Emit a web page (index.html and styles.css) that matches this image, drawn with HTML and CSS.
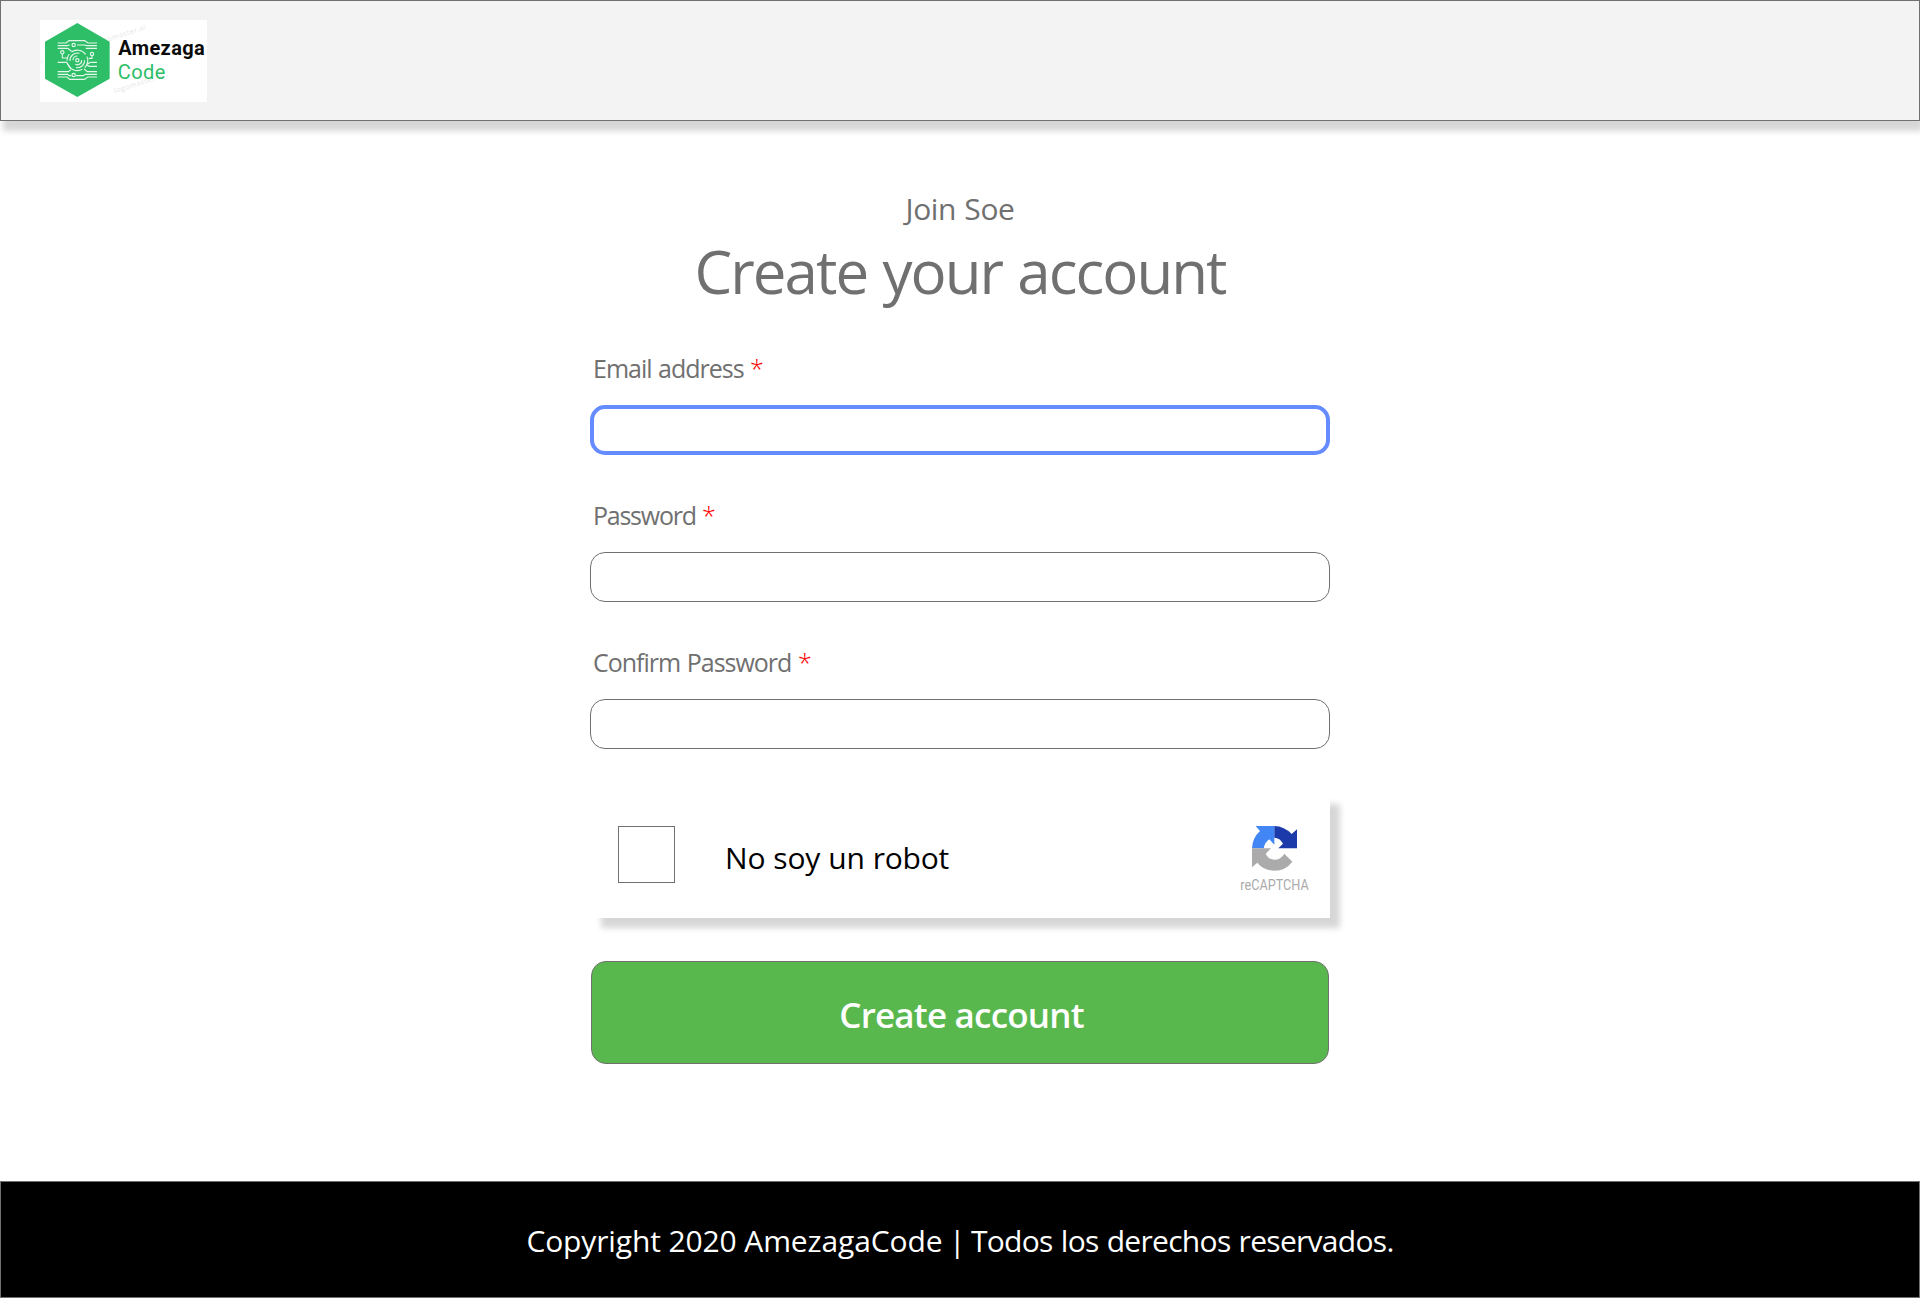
FILE: index.html
```html
<!DOCTYPE html>
<html lang="en">
<head>
<meta charset="utf-8">
<title>Create your account</title>
<link rel="stylesheet" href="styles.css">
</head>
<body>
<header class="header">
  <svg class="logo" viewBox="120 60 501 246" role="img" aria-label="Amezaga Code">
    <rect x="120" y="60" width="501" height="246" fill="#fff"/>
    <g class="watermark">
      <text transform="translate(292 135) rotate(-18)" textLength="154">logomaster.ai</text>
      <text transform="translate(345 280) rotate(-18)" textLength="154">logomaster.ai</text>
      <text transform="translate(123 194) rotate(-18)">r.</text>
    </g>
    <path fill="#2dbe67" d="M232 69 329 125V236L232 291 135 236V125Z"/>
    <g class="circuit">
      <path d="M173 129H198L207 122H214M228 122H254L264 129H291M173 137H201L209 135M173 145H203L214 153M231 135H251L261 137H291M257 145H291M187 163V174H201M276 168V175H266M173 187H200L212 205M291 187H272L263 192M291 199H268L259 194M173 215H205L213 209M173 223H203L208 227H214M173 231H201L209 238H254L263 231H291M228 227H250L256 223H291M252 207 262 215H291M207 122H254"/>
      <circle cx="221" cy="135" r="5"/>
      <circle cx="187" cy="157" r="5"/>
      <circle cx="276" cy="162" r="5"/>
      <circle cx="221" cy="225" r="5"/>
      <circle cx="232" cy="181" r="5"/>
      <path d="M214 156A31 31 0 0 1 257 163M261 170A31 31 0 0 1 254 203M247 208A31 31 0 0 1 203 192M201 182A31 31 0 0 1 208 162"/>
      <path d="M210 183A22 22 0 0 1 238 160M254 181A22 22 0 0 1 228 203M219 181A13 13 0 0 1 232 168M245 180A13 13 0 0 1 226 193"/>
    </g>
    <text class="brand brand-strong" x="355" y="166" textLength="259">Amezaga</text>
    <text class="brand brand-light" x="353" y="238" textLength="143">Code</text>
  </svg>
</header>

<main class="main">
  <p class="eyebrow">Join Soe</p>
  <h1 class="title">Create your account</h1>
  <form class="form">
    <div class="field">
      <label class="label" for="email">Email address <span class="required">*</span></label>
      <input class="input input-active" id="email" type="email">
    </div>
    <div class="field">
      <label class="label label-password" for="password">Password <span class="required">*</span></label>
      <input class="input" id="password" type="password">
    </div>
    <div class="field">
      <label class="label" for="confirm">Confirm Password <span class="required">*</span></label>
      <input class="input" id="confirm" type="password">
    </div>
    <div class="captcha">
      <span class="checkbox"></span>
      <span class="captcha-text">No soy un robot</span>
      <svg class="recaptcha" viewBox="117 104 216 216" role="img" aria-label="reCAPTCHA">
        <path fill="#4285f4" d="M167 107H223V163L208 147Q194 156 191 174H156Q157 143 180 122Z"/>
        <path fill="#1c3aa9" d="M223 107Q253 108 275 131L291 117V174H235L249 160Q240 142 223 142Z"/>
        <path fill="#ababab" d="M156 174H213L197 190Q206 208 223 208Q243 208 253 190L277 214Q257 241 223 241Q191 241 172 217L156 231Z"/>
        <text class="recaptcha-name" x="121" y="299" textLength="205" lengthAdjust="spacingAndGlyphs">reCAPTCHA</text>
      </svg>
    </div>
    <button class="submit" type="button">Create account</button>
  </form>
</main>

<footer class="footer">
  <p class="copyright"><span class="owner">Copyright 2020 AmezagaCode</span> | <span class="rights">Todos los derechos reservados.</span></p>
</footer>
</body>
</html>
```
FILE: styles.css
```css
* {
  box-sizing: border-box;
}

body {
  margin: 0;
  min-height: 1298px;
  display: flex;
  flex-direction: column;
  background: #fff;
  color: #707070;
  font-family: "Open Sans", "Noto Sans", sans-serif;
}

p,
h1 {
  margin: 0;
}

.header {
  height: 121px;
  padding: 19px 39px;
  background: #f3f3f3;
  border: 1px solid #707070;
  box-shadow: 3px 10px 6px rgba(0, 0, 0, 0.16);
}

.logo {
  display: block;
  width: 167px;
  height: 82px;
}

.watermark {
  fill: #e6e6e6;
  font: 400 21px "Open Sans", sans-serif;
}

.circuit {
  fill: none;
  stroke: #e3f7eb;
  stroke-width: 3.4;
}

.brand {
  font-family: Roboto, sans-serif;
  font-size: 60px;
}

.brand-strong {
  fill: #0b0b0b;
  font-weight: 700;
}

.brand-light {
  fill: #2dbe67;
  font-weight: 400;
}

.main {
  flex: 1;
  display: flex;
  flex-direction: column;
  align-items: center;
  padding-top: 68px;
}

.eyebrow {
  font-size: 30px;
  line-height: 40px;
  letter-spacing: -0.4px;
  word-spacing: 1px;
}

.title {
  margin-top: 2px;
  font-size: 60px;
  line-height: 80px;
  font-weight: 400;
  letter-spacing: -1.95px;
  word-spacing: 1.6px;
}

.form {
  width: 740px;
  margin-top: 40px;
}

.field {
  margin-bottom: 43px;
}

.label {
  display: block;
  padding-left: 3px;
  font-size: 25px;
  line-height: 34px;
  letter-spacing: -1px;
  word-spacing: 1px;
}

.label-password {
  letter-spacing: -1.25px;
}

.required {
  color: #f00;
  font-weight: 300;
}

.input {
  display: block;
  width: 100%;
  height: 50px;
  margin-top: 20px;
  border: 1px solid #707070;
  border-radius: 15px;
  background: #fff;
  outline: none;
}

.input-active {
  border: 4px solid #648bff;
}

.captcha {
  display: flex;
  align-items: flex-start;
  width: 739px;
  height: 124px;
  margin: 45px 0 43px 1px;
  padding: 32px 19px 0 27px;
  background: #fff;
  box-shadow: 10px 10px 6px rgba(0, 0, 0, 0.16);
}

.checkbox {
  width: 57px;
  height: 57px;
  border: 1px solid #707070;
}

.captcha-text {
  margin: 12px 0 0 50px;
  color: #000;
  font-size: 30px;
  line-height: 40px;
  letter-spacing: -0.2px;
  word-spacing: 0.5px;
}

.recaptcha {
  width: 72px;
  height: 72px;
  margin: -1px 0 0 auto;
}

.recaptcha-name {
  fill: #ababab;
  font: 400 43px Roboto, sans-serif;
}

.submit {
  display: block;
  width: 738px;
  height: 103px;
  margin-left: 1px;
  padding: 4px 0 0 3px;
  border: 1px solid #707070;
  border-radius: 15px;
  background: #59b84d;
  color: #fff;
  font: 600 35px/48px "Open Sans", sans-serif;
  letter-spacing: -0.8px;
}

.footer {
  display: flex;
  align-items: center;
  justify-content: center;
  height: 117px;
  padding-top: 2px;
  border: 1px solid #707070;
  background: #000;
  color: #fff;
}

.copyright {
  font-size: 30px;
  line-height: 40px;
  letter-spacing: -1.2px;
}

.owner {
  letter-spacing: -0.12px;
}

.rights {
  letter-spacing: -0.7px;
  word-spacing: 1px;
}
```
